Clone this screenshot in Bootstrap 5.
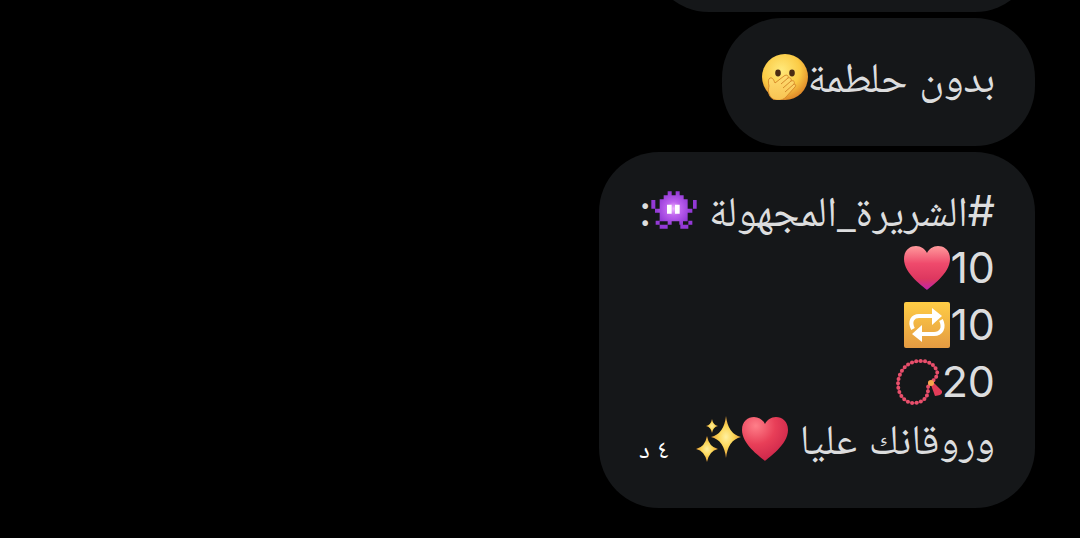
<!DOCTYPE html>
<html lang="ar" dir="rtl">
<head>
<meta charset="utf-8">
<meta name="viewport" content="width=device-width, initial-scale=1">
<title>محادثة</title>
<link rel="stylesheet" href="https://cdn.jsdelivr.net/npm/bootstrap@5.3.0/dist/css/bootstrap.min.css">
<style>
body { background: #000; color: #dcddde; font-family: Inter, "Noto Naskh Arabic", "Noto Sans Arabic", "DejaVu Sans", sans-serif; font-size: 43px; line-height: 57px; overflow: hidden; }
.thread { padding: 0 45px; gap: 6px; }
.bubble { background: #151719; border-radius: 60px; padding: 30px 40px 41px; }
.bubble p { white-space: pre; }
.ar { font-size: 42px; }
.thin { font-family: "Noto Sans", sans-serif; line-height: 1; }
.prior { width: 39%; height: 12px; overflow: hidden; }
.prior div { height: 128px; margin-top: -116px; }
.emoji { width: 46px; height: 46px; flex: none; }
.stamp { font-size: 26px; color: #fff; line-height: 36px; }
</style>
</head>
<body>
<main class="thread d-flex flex-column align-items-start">
  <div class="prior"><div class="bubble"></div></div>
  <article class="bubble">
    <p class="m-0 d-flex align-items-center"><span class="ar">بدون حلطمة</span><svg class="emoji" viewBox="0 0 46 46" role="img" aria-label="وجه">
      <defs><radialGradient id="face" cx=".42" cy=".35" r=".68"><stop offset="0" stop-color="#ffe97c"/><stop offset=".6" stop-color="#fbcb45"/><stop offset="1" stop-color="#dd8426"/></radialGradient><linearGradient id="hand" x2="0" y2="1"><stop stop-color="#ffdc70"/><stop offset="1" stop-color="#f8c352"/></linearGradient></defs>
      <circle cx="23" cy="23" r="23" fill="url(#face)"/>
      <ellipse cx="16" cy="19" rx="2.8" ry="3.4" fill="#4b2b12"/><ellipse cx="30" cy="19" rx="2.8" ry="3.4" fill="#4b2b12"/>
      <path d="M11 45C6 42 6 36 7 32c-1-4-1-7 1-8 3-1 4 3 5 5l9-7c3-2 5 0 4 2 2-1 4 1 3 3 3-1 4 1 3 3 2 0 2 2 1 3L24 43c-4 4-9 4-13 2z" fill="url(#hand)" stroke="#d98b2c" stroke-width="1"/>
      <path d="M26 24l-7 6m10-3l-8 7m11-4l-9 8" stroke="#d58b2b" stroke-width="1" fill="none"/>
    </svg></p>
  </article>
  <article class="bubble">
    <p class="m-0 d-flex align-items-center"><span>#</span><span class="ar">الشريرة<span class="thin">_</span>المجهولة </span><svg class="emoji" viewBox="18 10 138 138" role="img" aria-label="وحش">
      <defs><radialGradient id="alien" gradientUnits="userSpaceOnUse" cx="86" cy="72" r="52"><stop offset="0" stop-color="#f0b5ff"/><stop offset=".4" stop-color="#bd62ee"/><stop offset="1" stop-color="#9339d6"/></radialGradient></defs>
      <path fill="url(#alien)" d="M68 20h12v12h12V20h12v12h12v12h12v28h16V46h11v26h-13v12h-14v26h-14v10h-11v-10H80v10H68v-10H44V84H30V72H19V46h12v26h13V44h12V32h12zM32 108h12v12H32zm98 0h12v12h-12zM44 120h24v12H44zm62 0h24v12h-24z"/>
      <path fill="#fff" d="M66 60h14v27H66zm24 0h14v27H90z"/>
    </svg><span>:</span></p>
    <p class="m-0 d-flex align-items-center"><span>10</span><svg class="emoji" viewBox="0 0 46 46" role="img" aria-label="قلب">
      <defs><linearGradient id="pink" x2="0" y2="1"><stop stop-color="#ff9a9c"/><stop offset=".4" stop-color="#ef4a6c"/><stop offset=".75" stop-color="#dd375f"/><stop offset="1" stop-color="#c023ad"/></linearGradient></defs>
      <path fill="url(#pink)" d="M23 45C20 42 0 29 0 14 0 5 6 1 12 1c5 0 9 3 11 7 2-4 6-7 11-7 6 0 12 4 12 13 0 15-20 28-23 31z"/>
    </svg></p>
    <p class="m-0 d-flex align-items-center"><span>10</span><svg class="emoji" viewBox="0 0 46 46" role="img" aria-label="تكرار">
      <defs><linearGradient id="gold" x2="0" y2="1"><stop stop-color="#ffcd45"/><stop offset="1" stop-color="#e49b42"/></linearGradient></defs>
      <rect width="46" height="46" rx="2" fill="url(#gold)"/>
      <path d="M9 27C5 19 9 14 15 14h14M37 18c4 8 0 14-7 14H17" fill="none" stroke="#fff" stroke-width="4"/>
      <path d="M28 6l10 8-10 9zM18 23L8 32l10 8z" fill="#fff"/>
    </svg></p>
    <p class="m-0 d-flex align-items-center"><span>20</span><svg class="emoji" viewBox="0 0 46 46" role="img" aria-label="سبحة">
      <path d="M34 24C40 20 42 16 41 12 37 3 30 2 24 2 10 2 2 14 2 25c0 11 7 19 16 19 8 0 14-5 14-13 0-4 0-5 2-7" fill="none" stroke="#902444" stroke-width="2"/>
      <path d="M34 24C40 20 42 16 41 12 37 3 30 2 24 2 10 2 2 14 2 25c0 11 7 19 16 19 8 0 14-5 14-13 0-4 0-5 2-7" fill="none" stroke="#e7506b" stroke-width="4" stroke-linecap="round" stroke-dasharray="0 4.4"/>
      <path d="M37 23l9 9q1 4-7 5l-4-11z" fill="#e23c58"/><circle cx="35" cy="24" r="3" fill="#f5a64b"/>
    </svg></p>
    <div class="d-flex align-items-center justify-content-between">
      <p class="m-0 d-flex align-items-center"><span class="ar">وروقانك عليا </span><svg class="emoji" viewBox="0 0 46 46" role="img" aria-label="قلب أحمر">
        <defs><radialGradient id="red" cx=".3" cy=".2" r=".85"><stop offset="0" stop-color="#ff7f89"/><stop offset=".5" stop-color="#e83f58"/><stop offset="1" stop-color="#ca2449"/></radialGradient></defs>
        <path fill="url(#red)" d="M23 45C20 42 0 29 0 14 0 5 6 1 12 1c5 0 9 3 11 7 2-4 6-7 11-7 6 0 12 4 12 13 0 15-20 28-23 31z"/>
      </svg><svg class="emoji" viewBox="0 0 46 46" role="img" aria-label="بريق">
        <defs><radialGradient id="star"><stop stop-color="#fff0a0"/><stop offset=".5" stop-color="#fcd657"/><stop offset="1" stop-color="#e49a35"/></radialGradient></defs>
        <path fill="url(#star)" d="M30 0q2 18 15 21-13 3-15 21-2-18-15-21Q28 18 30 0z"/><path fill="url(#star)" d="M11 20q2 11 11 13-9 2-11 13Q9 35 0 33q9-2 11-13z"/><path fill="url(#star)" d="M16 3q1 6 6 7-5 1-6 7-1-6-6-7 5-1 6-7z"/>
      </svg></p>
      <time class="stamp align-self-end">٤ د</time>
    </div>
  </article>
</main>
<script src="https://cdn.jsdelivr.net/npm/bootstrap@5.3.0/dist/js/bootstrap.bundle.min.js"></script>
</body>
</html>
